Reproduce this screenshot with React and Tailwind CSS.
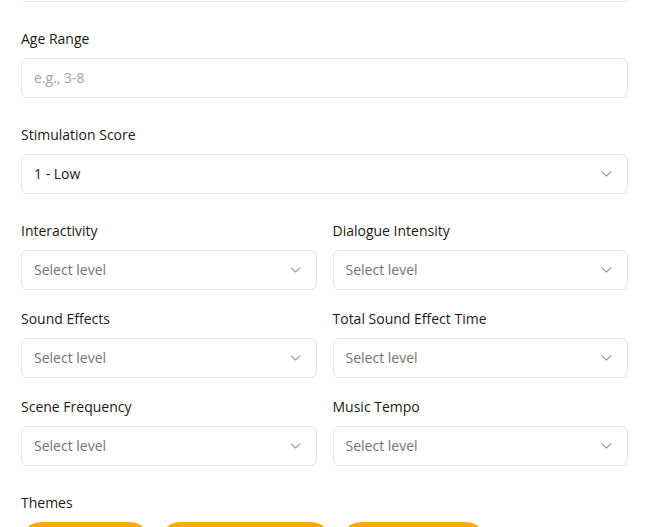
import React from "react";

const Chevron = () => (
  <svg width="11" height="6" viewBox="0 0 11 6" fill="none" className="shrink-0">
    <path d="M1 0.8 L5.5 5 L10 0.8" stroke="#9a9a9a" strokeWidth="1.1" strokeLinecap="round" strokeLinejoin="round" />
  </svg>
);

const Label = ({ children }) => (
  <div className="text-sm leading-5 text-[#1c1917] mb-[9px]">{children}</div>
);

const Select = ({ value, placeholder }) => (
  <div className="h-10 w-full rounded-md border border-[#e5e5e5] bg-white flex items-center justify-between pl-3 pr-[15px]">
    <span className={value ? "text-sm text-[#1c1917]" : "text-sm text-[#78716c]"}>
      {value || placeholder}
    </span>
    <Chevron />
  </div>
);

const Field = ({ label, children }) => (
  <div>
    <Label>{label}</Label>
    {children}
  </div>
);

export default function App() {
  return (
    <div
      className="w-[649px] h-[527px] overflow-hidden bg-white px-[21px]"
      style={{ fontFamily: '"Open Sans", "Noto Sans", sans-serif' }}
    >
      <div className="-mt-[38px] h-10 w-full rounded-md border border-[#e5e5e5] bg-white" />

      <div className="mt-[27px]">
        <Field label="Age Range">
          <div className="h-10 w-full rounded-md border border-[#e5e5e5] bg-white flex items-center px-3">
            <span className="text-sm text-[#a8a29e]">e.g., 3-8</span>
          </div>
        </Field>
      </div>

      <div className="mt-[27px]">
        <Field label="Stimulation Score">
          <Select value="1 - Low" />
        </Field>
      </div>

      <div className="mt-[27px] grid grid-cols-2 gap-x-4 gap-y-[19px]">
        <Field label="Interactivity">
          <Select placeholder="Select level" />
        </Field>
        <Field label="Dialogue Intensity">
          <Select placeholder="Select level" />
        </Field>
        <Field label="Sound Effects">
          <Select placeholder="Select level" />
        </Field>
        <Field label="Total Sound Effect Time">
          <Select placeholder="Select level" />
        </Field>
        <Field label="Scene Frequency">
          <Select placeholder="Select level" />
        </Field>
        <Field label="Music Tempo">
          <Select placeholder="Select level" />
        </Field>
      </div>

      <div className="mt-[27px]">
        <div className="text-sm leading-5 text-[#1c1917]">Themes</div>
        <div className="mt-[9px] flex gap-[10px]">
          <div className="w-[129px] rounded-full bg-[#ffab00] px-4 py-2.5 text-center text-sm leading-5 text-white">Adventure</div>
          <div className="w-[171px] rounded-full bg-[#ffab00] px-4 py-2.5 text-center text-sm leading-5 text-white">Friendship</div>
          <div className="w-[145px] rounded-full bg-[#ffab00] px-4 py-2.5 text-center text-sm leading-5 text-white">Nature</div>
        </div>
      </div>
    </div>
  );
}
